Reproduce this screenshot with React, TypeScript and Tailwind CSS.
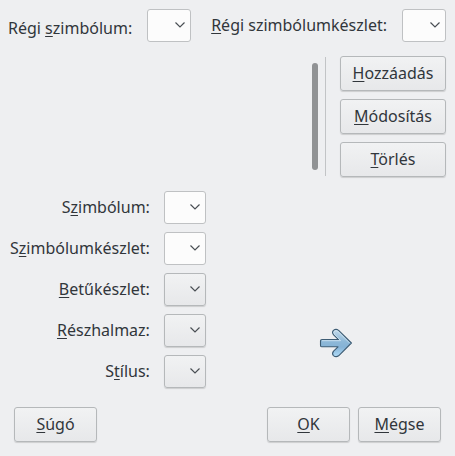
import type { ReactNode } from "react";

function Key({ children }: { children: ReactNode }) {
  return (
    <span className="underline decoration-1 underline-offset-2 [text-decoration-skip-ink:none]">
      {children}
    </span>
  );
}

const raised =
  "border-[#b5b8ba] bg-linear-to-b from-[#f1f2f3] to-[#e7e8ea] shadow-[0_1px_1px_rgba(0,0,0,0.14)]";

function Combo({ id, editable = false, wide = false }: { id: string; editable?: boolean; wide?: boolean }) {
  return (
    <div className={`relative h-[33px] shrink-0 ${wide ? "w-11" : "w-[42px]"}`}>
      <select
        id={id}
        className={`block h-full w-full appearance-none rounded-[3px] border ${
          editable ? "border-[#bfc1c3] bg-[#fcfcfc]" : raised
        }`}
      />
      <svg
        className="pointer-events-none absolute top-3 right-[5px] h-2 w-3"
        viewBox="0 0 12 8"
        fill="none"
        stroke="#4a4f54"
        strokeWidth="1.2"
        aria-hidden="true"
      >
        <path d="M1.5 1.5 L6 6 L10.5 1.5" />
      </svg>
    </div>
  );
}

function PushButton({ children, className = "" }: { children: ReactNode; className?: string }) {
  return (
    <button type="button" className={`h-[35px] rounded-[3px] border pb-0.5 text-center ${raised} ${className}`}>
      {children}
    </button>
  );
}

function Field({ id, label, editable }: { id: string; label: ReactNode; editable?: boolean }) {
  return (
    <>
      <label htmlFor={id} className="pb-0.5 text-right whitespace-nowrap">
        {label}
      </label>
      <Combo id={id} editable={editable} />
    </>
  );
}

function ArrowIcon() {
  return (
    <svg className="h-8 w-[34px]" viewBox="0 0 34 32" role="img" aria-label="Csere">
      <defs>
        <linearGradient id="arrowFill" x1="0" y1="0" x2="0" y2="1">
          <stop offset="0" stopColor="#c3daea" />
          <stop offset="0.45" stopColor="#8db8d8" />
          <stop offset="0.65" stopColor="#86b3d6" />
          <stop offset="1" stopColor="#b0dcf8" />
        </linearGradient>
      </defs>
      <path
        d="M3 12.5 H19.5 L14.6 7.8 Q12.6 5.4 14.4 3.4 Q17 1.4 19.6 3.4 L32.4 16 L19.6 28.8 Q17 30.6 14.4 28.6 Q12.6 26.6 14.6 24.2 L19 19.8 H3 Q1.5 19.8 1.5 18.4 V13.8 Q1.5 12.5 3 12.5 Z"
        fill="url(#arrowFill)"
        stroke="#3d5c74"
        strokeWidth="1.1"
        strokeLinejoin="round"
      />
      <path
        d="M3 13.7 H21.6 L15.4 7.2 Q14.2 5.4 15.3 4.2 Q17 3 18.8 4.2 L30.6 16"
        fill="none"
        stroke="#dcecf6"
        strokeOpacity="0.7"
      />
    </svg>
  );
}

export default function App() {
  return (
    <div className="min-h-screen bg-[#eeeff1] font-['Noto_Sans',sans-serif] text-base leading-6 text-[#31363b]">
      <header className="flex items-start justify-between pt-[9px] pr-[9px] pl-2">
        <div className="flex items-start gap-[15px]">
          <label htmlFor="old-symbol" className="pt-[7px] whitespace-nowrap">
            Régi <Key>s</Key>zimbólum:
          </label>
          <Combo id="old-symbol" editable wide />
        </div>
        <div className="flex items-start gap-[15px]">
          <label htmlFor="old-set" className="pt-1 whitespace-nowrap">
            <Key>R</Key>égi szimbólumkészlet:
          </label>
          <Combo id="old-set" editable wide />
        </div>
      </header>

      <section className="flex pt-[14px] pr-[9px]">
        <div className="flex flex-1 justify-end py-[7px] pr-[7px]">
          <div className="w-[6px] rounded-full bg-[#909294]" />
        </div>
        <div className="my-px mr-[14px] w-px bg-[#c2c4c6]" />
        <div className="flex w-[106px] flex-col gap-2">
          <PushButton>
            <Key>H</Key>ozzáadás
          </PushButton>
          <PushButton>
            <Key>M</Key>ódosítás
          </PushButton>
          <PushButton>
            <Key>T</Key>örlés
          </PushButton>
        </div>
      </section>

      <main className="flex pt-[14px] pl-[10px]">
        <div className="grid grid-cols-[auto_auto] items-center gap-x-[14px] gap-y-2">
          <Field id="symbol" editable label={<>S<Key>z</Key>imbólum:</>} />
          <Field id="symbol-set" editable label={<>S<Key>z</Key>imbólumkészlet:</>} />
          <Field id="font" label={<><Key>B</Key>etűkészlet:</>} />
          <Field id="subset" label={<><Key>R</Key>észhalmaz:</>} />
          <Field id="typeface" label={<>S<Key>t</Key>ílus:</>} />
        </div>
        <div className="flex flex-1 items-end justify-center pr-[9px] pb-[29px] pl-5">
          <ArrowIcon />
        </div>
      </main>

      <footer className="flex gap-2 px-[14px] pt-[19px]">
        <PushButton className="mr-auto w-[83px]">
          <Key>S</Key>úgó
        </PushButton>
        <PushButton className="w-[83px]">
          <Key>O</Key>K
        </PushButton>
        <PushButton className="w-[83px]">
          <Key>M</Key>égse
        </PushButton>
      </footer>
    </div>
  );
}
